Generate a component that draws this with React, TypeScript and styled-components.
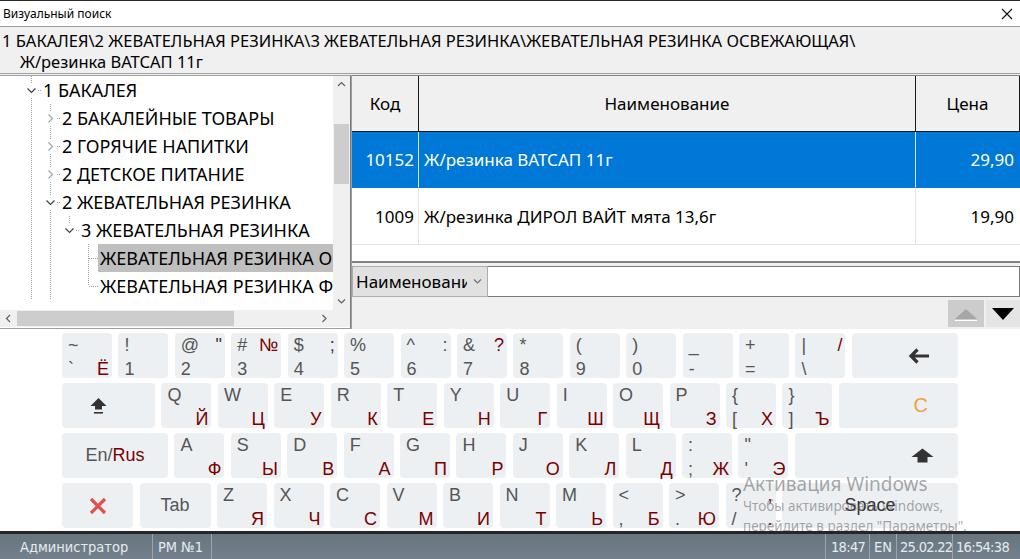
import React from "react";
import styled, { createGlobalStyle } from "styled-components";

const UI = `"Noto Sans", "Segoe UI", sans-serif`;
const KB = `"Liberation Sans", Arial, sans-serif`;

const Global = createGlobalStyle`
  html, body { margin: 0; padding: 0; background: #f0f0f0; overflow: hidden; }
  body { font-family: ${UI}; color: #000; }
  * { box-sizing: border-box; }
`;

const Window = styled.div`
  width: 1020px;
  height: 559px;
  display: flex;
  flex-direction: column;
  background: #f0f0f0;
  overflow: hidden;
`;

/* ---------- title ---------- */
const TitleBar = styled.div`
  height: 27px;
  flex: none;
  background: #fff;
  border-top: 1px solid #2b2b2b;
  border-bottom: 1px solid #a0a0a0;
  display: flex;
  align-items: center;
  justify-content: space-between;
  padding: 0 7px 0 3px;
  font-size: 12px;
`;

const Breadcrumb = styled.div`
  height: 47px;
  flex: none;
  padding: 3px 2px 0;
  font-size: 16.5px;
  line-height: 21px;
  white-space: nowrap;
  border-bottom: 1px solid #a0a0a0;
`;

const CrumbLine = styled.div<{ $indent?: number }>`
  padding-left: ${(p) => p.$indent ?? 0}px;
`;

/* ---------- main ---------- */
const Main = styled.div`
  height: 254px;
  flex: none;
  display: flex;
  margin-top: 1px;
`;

const TreePanel = styled.div`
  width: 351px;
  flex: none;
  display: flex;
  flex-direction: column;
  background: #fff;
  border-top: 1px solid #a0a0a0;
  border-right: 1px solid #7a7a7a;
  border-bottom: 1px solid #a0a0a0;
`;

const TreeBody = styled.div`
  flex: 1;
  display: flex;
  min-height: 0;
`;

const TreeContent = styled.div`
  flex: 1;
  overflow: hidden;
  padding-top: 0;
  padding-left: 22px;
  font-size: 18px;
`;

const TreeRow = styled.div`
  height: 28px;
  display: flex;
  align-items: center;
  white-space: nowrap;
`;

const TreeCell = styled.svg`
  width: 19px;
  height: 28px;
  flex: none;
  display: block;
`;

const TreeLabel = styled.span<{ $selected?: boolean }>`
  padding: 0 2px;
  line-height: 28px;
  background: ${(p) => (p.$selected ? "#bfbfbf" : "transparent")};
`;

const VScroll = styled.div`
  width: 17px;
  flex: none;
  background: #f0f0f0;
  display: flex;
  flex-direction: column;
`;

const HScroll = styled.div`
  height: 17px;
  flex: none;
  background: #f0f0f0;
  display: flex;
  margin-bottom: 1px;
`;

const ScrollBtn = styled.div`
  width: 17px;
  height: 17px;
  flex: none;
  display: flex;
  align-items: center;
  justify-content: center;
`;

const ScrollTrack = styled.div<{ $vertical?: boolean }>`
  flex: 1;
  display: flex;
  flex-direction: ${(p) => (p.$vertical ? "column" : "row")};
`;

const Thumb = styled.div<{ $vertical?: boolean; $offset: number; $size: number }>`
  background: #cdcdcd;
  ${(p) =>
    p.$vertical
      ? `margin: ${p.$offset}px 1px 0 1px; height: ${p.$size}px;`
      : `margin: 1px 0 1px ${p.$offset}px; width: ${p.$size}px;`}
`;

const Corner = styled.div`
  width: 17px;
  flex: none;
  background: #f0f0f0;
`;

const RightPanel = styled.div`
  flex: 1;
  display: flex;
  flex-direction: column;
  border-left: 1px solid #a0a0a0;
`;

const Table = styled.div`
  height: 188px;
  flex: none;
  background: #fff;
  border-top: 1px solid #828282;
  border-bottom: 2px solid #828282;
  display: grid;
  grid-template-columns: 67px 497px 1fr;
  grid-template-rows: 56px 56px 57px 1fr;
`;

const HeadCell = styled.div`
  background: #f0f0f0;
  border-right: 1px solid #1a1a1a;
  border-bottom: 1px solid #1a1a1a;
  display: flex;
  align-items: center;
  justify-content: center;
  font-size: 17px;
  &:last-of-type { border-right: 0; }
`;

const Cell = styled.div<{ $align: "left" | "right"; $sel?: boolean; $last?: boolean; $pad: number }>`
  display: flex;
  align-items: center;
  justify-content: ${(p) => (p.$align === "right" ? "flex-end" : "flex-start")};
  padding: ${(p) => (p.$align === "right" ? `0 ${p.$pad}px 0 0` : `0 0 0 ${p.$pad}px`)};
  font-size: 17px;
  white-space: nowrap;
  background: ${(p) => (p.$sel ? "#0078d7" : "#fff")};
  color: ${(p) => (p.$sel ? "#fff" : "#000")};
  border-right: ${(p) => (p.$last ? "0" : p.$sel ? "1px solid #d0e4f5" : "1px solid #e3e3e3")};
  border-bottom: 1px solid ${(p) => (p.$sel ? "#0078d7" : "#e3e3e3")};
`;

const Filler = styled.div`
  grid-column: 1 / -1;
`;

const FilterRow = styled.div`
  height: 31px;
  flex: none;
  margin-top: 3px;
  display: flex;
`;

const SelectBox = styled.div`
  width: 136px;
  flex: none;
  display: flex;
  align-items: center;
  background: #e1e1e1;
  border: 1px solid #adadad;
  font-size: 17px;
  overflow: hidden;
`;

const SelectText = styled.span`
  flex: 1;
  min-width: 0;
  overflow: hidden;
  white-space: nowrap;
  padding-left: 3px;
`;

const SelectArrow = styled.span`
  width: 20px;
  flex: none;
  display: flex;
  justify-content: center;
`;

const FilterInput = styled.div`
  flex: 1;
  background: #fff;
  border: 1px solid #7a7a7a;
  border-left: 0;
`;

const NavRow = styled.div`
  flex: 1;
  display: flex;
  justify-content: flex-end;
  align-items: flex-start;
  gap: 2px;
  padding-top: 3px;
`;

const NavButton = styled.div<{ $disabled?: boolean; $w: number }>`
  width: ${(p) => p.$w}px;
  height: 27px;
  display: flex;
  align-items: center;
  justify-content: center;
  background: ${(p) => (p.$disabled ? "#cccccc" : "#e5e5e5")};
`;

/* ---------- keyboard ---------- */
const Keyboard = styled.div`
  height: 202px;
  flex: none;
  position: relative;
  background: #fff;
  padding: 4px 62px 0;
  display: flex;
  flex-direction: column;
  gap: 5px;
  overflow: hidden;
  font-family: ${KB};
`;

const KeyRow = styled.div`
  height: 45px;
  display: flex;
  justify-content: space-between;
`;

const Key = styled.div<{ $w: number }>`
  width: ${(p) => p.$w}px;
  flex: none;
  background: #edf0f3;
  border-radius: 4px;
  display: grid;
  grid-template-columns: 1fr auto;
  grid-template-rows: 1fr 1fr;
  padding: 3px 3px 0 6px;
  font-size: 18px;
  line-height: 18px;
  color: #555;
`;

const KLabel = styled.span<{ $red?: boolean; $pos: "tl" | "tr" | "bl" | "br"; $dark?: boolean }>`
  grid-column: ${(p) => (p.$pos === "tl" || p.$pos === "bl" ? 1 : 2)};
  grid-row: ${(p) => (p.$pos === "tl" || p.$pos === "tr" ? 1 : 2)};
  align-self: ${(p) => (p.$pos === "tl" || p.$pos === "tr" ? "start" : "end")};
  color: ${(p) => (p.$red ? "#7a0000" : p.$dark ? "#333" : "#555")};
`;

const WideKey = styled.div<{ $w: number; $justify?: string; $pl?: number; $pr?: number }>`
  width: ${(p) => p.$w}px;
  flex: none;
  background: #edf0f3;
  border-radius: 4px;
  display: flex;
  align-items: center;
  justify-content: ${(p) => p.$justify ?? "center"};
  padding: 0 ${(p) => p.$pr ?? 0}px 0 ${(p) => p.$pl ?? 0}px;
  font-size: 18px;
  color: #555;
`;

const Red = styled.span`
  color: #7a0000;
`;

const Orange = styled.span`
  color: #f0a23c;
  font-size: 20px;
`;

const SpaceText = styled.span`
  color: #333;
`;

const Watermark = styled.div`
  position: absolute;
  left: 743px;
  top: 143px;
  color: rgba(95, 95, 95, 0.55);
  font-family: ${UI};
  white-space: nowrap;
  pointer-events: none;
`;

const WmTitle = styled.div`
  font-size: 19px;
  line-height: 24px;
`;

const WmText = styled.div`
  font-size: 13.5px;
  line-height: 20px;
`;

/* ---------- status ---------- */
const StatusBar = styled.div`
  height: 29px;
  flex: none;
  border-top: 3px solid #262626;
  background: linear-gradient(#67757f, #74818c);
  display: flex;
  color: #e6ebef;
  font-family: "Liberation Sans Narrow", "DejaVu Sans Condensed", ${UI};
  font-stretch: condensed;
  font-size: 14.5px;
`;

const StatusItem = styled.div<{ $w?: number; $pl?: number; $tight?: boolean }>`
  ${(p) => (p.$w ? `width: ${p.$w}px; flex: none;` : "flex: 1;")}
  display: flex;
  align-items: center;
  padding-left: ${(p) => p.$pl ?? 5}px;
  letter-spacing: ${(p) => (p.$tight ? "-0.7px" : "0")};
  border-right: 1px solid #9aa5af;
  white-space: nowrap;
  overflow: hidden;
  &:last-child { border-right: 0; }
`;

/* ---------- icons ---------- */
const Chevron = ({ dir, color = "#606060" }: { dir: "up" | "down" | "left" | "right"; color?: string }) => {
  const d = {
    up: "M1 5 L4.5 1.5 L8 5",
    down: "M1 1.5 L4.5 5 L8 1.5",
    left: "M5 1 L1.5 4.5 L5 8",
    right: "M1.5 1 L5 4.5 L1.5 8",
  }[dir];
  const vert = dir === "up" || dir === "down";
  return (
    <svg width={vert ? 9 : 7} height={vert ? 7 : 9} viewBox={vert ? "0 0 9 7" : "0 0 7 9"}>
      <path d={d} fill="none" stroke={color} strokeWidth="1.2" />
    </svg>
  );
};

type TreeNode = {
  depth: number;
  label: string;
  exp?: "open" | "closed";
  guides: boolean[];
  bottom: boolean;
  selected?: boolean;
};

const tree: TreeNode[] = [
  { depth: 1, label: "1 БАКАЛЕЯ", exp: "open", guides: [], bottom: true },
  { depth: 2, label: "2 БАКАЛЕЙНЫЕ ТОВАРЫ", exp: "closed", guides: [true], bottom: true },
  { depth: 2, label: "2 ГОРЯЧИЕ НАПИТКИ", exp: "closed", guides: [true], bottom: true },
  { depth: 2, label: "2 ДЕТСКОЕ ПИТАНИЕ", exp: "closed", guides: [true], bottom: true },
  { depth: 2, label: "2 ЖЕВАТЕЛЬНАЯ РЕЗИНКА", exp: "open", guides: [true], bottom: true },
  { depth: 3, label: "3 ЖЕВАТЕЛЬНАЯ РЕЗИНКА", exp: "open", guides: [true, true], bottom: false },
  { depth: 4, label: "ЖЕВАТЕЛЬНАЯ РЕЗИНКА ОСВЕЖАЮЩАЯ", guides: [true, true, false], bottom: true, selected: true },
  { depth: 4, label: "ЖЕВАТЕЛЬНАЯ РЕЗИНКА ФРУКТОВАЯ", guides: [true, true, false], bottom: false },
];

const LINE = "#a0a0a0";

const GuideCell = ({ on }: { on: boolean }) => (
  <TreeCell viewBox="0 0 19 28">
    {on && <line x1="9.5" y1="0" x2="9.5" y2="28" stroke={LINE} strokeDasharray="1 1" />}
  </TreeCell>
);

const ExpanderCell = ({ node }: { node: TreeNode }) => (
  <TreeCell viewBox="0 0 19 28">
    <line x1="9.5" y1="0" x2="9.5" y2="14" stroke={LINE} strokeDasharray="1 1" />
    {node.bottom && <line x1="9.5" y1="14" x2="9.5" y2="28" stroke={LINE} strokeDasharray="1 1" />}
    <line x1="10" y1="14.5" x2="19" y2="14.5" stroke={LINE} strokeDasharray="1 1" />
    {node.exp && <rect x="3" y="8" width="13" height="13" fill="#fff" />}
    {node.exp === "open" && <path d="M5.5 12.5 L9.5 16.5 L13.5 12.5" fill="none" stroke="#404040" strokeWidth="1.2" />}
    {node.exp === "closed" && <path d="M7.5 10.5 L11.5 14.5 L7.5 18.5" fill="none" stroke="#a6a6a6" strokeWidth="1.2" />}
  </TreeCell>
);

type K = { tl?: string; tr?: string; trRed?: boolean; trDark?: boolean; bl?: string; br?: string };

const row1: K[] = [
  { tl: "~", bl: "`", br: "Ё" },
  { tl: "!", bl: "1" },
  { tl: "@", tr: "\"", trDark: true, bl: "2" },
  { tl: "#", tr: "№", trRed: true, bl: "3" },
  { tl: "$", tr: ";", trDark: true, bl: "4" },
  { tl: "%", bl: "5" },
  { tl: "^", tr: ":", bl: "6" },
  { tl: "&", tr: "?", trRed: true, bl: "7" },
  { tl: "*", bl: "8" },
  { tl: "(", bl: "9" },
  { tl: ")", bl: "0" },
  { tl: "_", bl: "-" },
  { tl: "+", bl: "=" },
  { tl: "|", tr: "/", trRed: true, bl: "\\" },
];

const row2: K[] = [
  { tl: "Q", br: "Й" },
  { tl: "W", br: "Ц" },
  { tl: "E", br: "У" },
  { tl: "R", br: "К" },
  { tl: "T", br: "Е" },
  { tl: "Y", br: "Н" },
  { tl: "U", br: "Г" },
  { tl: "I", br: "Ш" },
  { tl: "O", br: "Щ" },
  { tl: "P", br: "З" },
  { tl: "{", bl: "[", br: "Х" },
  { tl: "}", bl: "]", br: "Ъ" },
];

const row3: K[] = [
  { tl: "A", br: "Ф" },
  { tl: "S", br: "Ы" },
  { tl: "D", br: "В" },
  { tl: "F", br: "А" },
  { tl: "G", br: "П" },
  { tl: "H", br: "Р" },
  { tl: "J", br: "О" },
  { tl: "K", br: "Л" },
  { tl: "L", br: "Д" },
  { tl: ":", bl: ";", br: "Ж" },
  { tl: "\"", bl: "'", br: "Э" },
];

const row4: K[] = [
  { tl: "Z", br: "Я" },
  { tl: "X", br: "Ч" },
  { tl: "C", br: "С" },
  { tl: "V", br: "М" },
  { tl: "B", br: "И" },
  { tl: "N", br: "Т" },
  { tl: "M", br: "Ь" },
  { tl: "<", bl: ",", br: "Б" },
  { tl: ">", bl: ".", br: "Ю" },
  { tl: "?", tr: ",", trRed: true, bl: "/", br: "." },
];

const CharKey = ({ k }: { k: K }) => (
  <Key $w={50}>
    {k.tl && <KLabel $pos="tl">{k.tl}</KLabel>}
    {k.tr && (
      <KLabel $pos="tr" $red={k.trRed} $dark={k.trDark}>
        {k.tr}
      </KLabel>
    )}
    {k.bl && <KLabel $pos="bl">{k.bl}</KLabel>}
    {k.br && (
      <KLabel $pos="br" $red>
        {k.br}
      </KLabel>
    )}
  </Key>
);

const ShiftIcon = () => (
  <svg width="17" height="18" viewBox="0 0 17 18">
    <path d="M8.5 1 L16.5 9 L12 9 L12 12.5 L5 12.5 L5 9 L0.5 9 Z" fill="#333" />
    <rect x="4" y="15" width="9" height="1.6" fill="#333" />
  </svg>
);

const UpIcon = () => (
  <svg width="23" height="15" viewBox="0 0 23 15">
    <path d="M11.5 0.5 L22.5 9 L16.5 9 L16.5 14.5 L6.5 14.5 L6.5 9 L0.5 9 Z" fill="#333" />
  </svg>
);

const BackIcon = () => (
  <svg width="22" height="16" viewBox="0 0 22 16">
    <path d="M21 8 H3 M9.5 1.5 L3 8 L9.5 14.5" fill="none" stroke="#333" strokeWidth="3.2" strokeLinejoin="miter" />
  </svg>
);

const CrossIcon = () => (
  <svg width="18" height="18" viewBox="0 0 18 18">
    <path d="M2 2 L16 16 M16 2 L2 16" stroke="#e0504c" strokeWidth="3.2" />
  </svg>
);

const CloseIcon = () => (
  <svg width="12" height="12" viewBox="0 0 12 12">
    <path d="M1 1 L11 11 M11 1 L1 11" stroke="#111" strokeWidth="1.1" />
  </svg>
);

const TriUp = () => (
  <svg width="26" height="16" viewBox="0 0 26 16">
    <path d="M2 13 L13 3 L24 13 Z" fill="#a6a6a6" />
    <rect x="2" y="14" width="22" height="1" fill="#fff" />
  </svg>
);

const TriDown = () => (
  <svg width="24" height="14" viewBox="0 0 24 14">
    <path d="M1 1 L23 1 L12 13 Z" fill="#000" />
  </svg>
);

export default function App() {
  return (
    <Window>
      <Global />
      <TitleBar>
        <span>Визуальный поиск</span>
        <CloseIcon />
      </TitleBar>
      <Breadcrumb>
        <CrumbLine>1 БАКАЛЕЯ\2 ЖЕВАТЕЛЬНАЯ РЕЗИНКА\3 ЖЕВАТЕЛЬНАЯ РЕЗИНКА\ЖЕВАТЕЛЬНАЯ РЕЗИНКА ОСВЕЖАЮЩАЯ\</CrumbLine>
        <CrumbLine $indent={18}>Ж/резинка ВАТСАП 11г</CrumbLine>
      </Breadcrumb>
      <Main>
        <TreePanel>
          <TreeBody>
            <TreeContent>
              {tree.map((n, i) => (
                <TreeRow key={i}>
                  {n.guides.map((g, j) => (
                    <GuideCell key={j} on={g} />
                  ))}
                  <ExpanderCell node={n} />
                  <TreeLabel $selected={n.selected}>{n.label}</TreeLabel>
                </TreeRow>
              ))}
            </TreeContent>
            <VScroll>
              <ScrollBtn>
                <Chevron dir="up" />
              </ScrollBtn>
              <ScrollTrack $vertical>
                <Thumb $vertical $offset={31} $size={60} />
              </ScrollTrack>
              <ScrollBtn>
                <Chevron dir="down" />
              </ScrollBtn>
            </VScroll>
          </TreeBody>
          <HScroll>
            <ScrollBtn>
              <Chevron dir="left" />
            </ScrollBtn>
            <ScrollTrack>
              <Thumb $offset={0} $size={217} />
            </ScrollTrack>
            <ScrollBtn>
              <Chevron dir="right" />
            </ScrollBtn>
            <Corner />
          </HScroll>
        </TreePanel>
        <RightPanel>
          <Table>
            <HeadCell>Код</HeadCell>
            <HeadCell>Наименование</HeadCell>
            <HeadCell>Цена</HeadCell>
            <Cell $align="right" $pad={4} $sel>10152</Cell>
            <Cell $align="left" $pad={5} $sel>Ж/резинка ВАТСАП 11г</Cell>
            <Cell $align="right" $pad={6} $sel $last>29,90</Cell>
            <Cell $align="right" $pad={4}>1009</Cell>
            <Cell $align="left" $pad={5}>Ж/резинка ДИРОЛ ВАЙТ мята 13,6г</Cell>
            <Cell $align="right" $pad={6} $last>19,90</Cell>
            <Filler />
          </Table>
          <FilterRow>
            <SelectBox>
              <SelectText>Наименование</SelectText>
              <SelectArrow>
                <Chevron dir="down" color="#707070" />
              </SelectArrow>
            </SelectBox>
            <FilterInput />
          </FilterRow>
          <NavRow>
            <NavButton $disabled $w={36}>
              <TriUp />
            </NavButton>
            <NavButton $w={34}>
              <TriDown />
            </NavButton>
          </NavRow>
        </RightPanel>
      </Main>
      <Keyboard>
        <KeyRow>
          {row1.map((k, i) => (
            <CharKey key={i} k={k} />
          ))}
          <WideKey $w={106} $justify="flex-end" $pr={28}>
            <BackIcon />
          </WideKey>
        </KeyRow>
        <KeyRow>
          <WideKey $w={93} $justify="flex-start" $pl={28}>
            <ShiftIcon />
          </WideKey>
          {row2.map((k, i) => (
            <CharKey key={i} k={k} />
          ))}
          <WideKey $w={119} $justify="flex-end" $pr={30}>
            <Orange>C</Orange>
          </WideKey>
        </KeyRow>
        <KeyRow>
          <WideKey $w={106}>
            <span>
              En/<Red>Rus</Red>
            </span>
          </WideKey>
          {row3.map((k, i) => (
            <CharKey key={i} k={k} />
          ))}
          <WideKey $w={163} $justify="flex-end" $pr={24}>
            <UpIcon />
          </WideKey>
        </KeyRow>
        <KeyRow>
          <WideKey $w={71}>
            <CrossIcon />
          </WideKey>
          <WideKey $w={71}>Tab</WideKey>
          {row4.map((k, i) => (
            <CharKey key={i} k={k} />
          ))}
          <WideKey $w={176}>
            <SpaceText>Space</SpaceText>
          </WideKey>
        </KeyRow>
        <Watermark>
          <WmTitle>Активация Windows</WmTitle>
          <WmText>Чтобы активировать Windows,</WmText>
          <WmText>перейдите в раздел "Параметры".</WmText>
        </Watermark>
      </Keyboard>
      <StatusBar>
        <StatusItem $w={153} $pl={20}>Администратор</StatusItem>
        <StatusItem $w={59}>РМ №1</StatusItem>
        <StatusItem />
        <StatusItem $w={44} $tight>18:47</StatusItem>
        <StatusItem $w={27} $pl={4}>EN</StatusItem>
        <StatusItem $w={56} $pl={3} $tight>25.02.22</StatusItem>
        <StatusItem $w={67} $pl={3} $tight>16:54:38</StatusItem>
      </StatusBar>
    </Window>
  );
}
